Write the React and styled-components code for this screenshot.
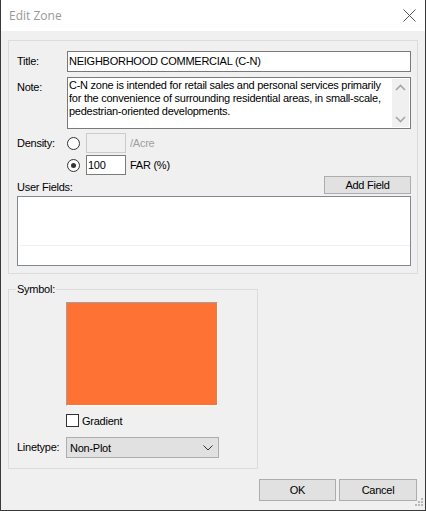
import React from "react";
import styled, { createGlobalStyle } from "styled-components";

const Global = createGlobalStyle`
  html, body { margin: 0; padding: 0; background: #f0f0f0; }
  body { font-family: "Liberation Sans", Arial, sans-serif; font-size: 11px; color: #000; letter-spacing: -0.25px; }
  * { box-sizing: border-box; }
`;

const Window = styled.div`
  width: 426px;
  height: 511px;
  background: #f0f0f0;
  border-left: 1px solid #3a3a3a;
  border-right: 1px solid #3a3a3a;
  border-bottom: 1px solid #3a3a3a;
  display: flex;
  flex-direction: column;
  position: relative;
  overflow: hidden;
`;

const TitleBar = styled.div`
  height: 31px;
  background: #fff;
  display: flex;
  align-items: center;
  justify-content: space-between;
  padding: 0 9px 1px 8px;
`;

const TitleText = styled.span`
  font-family: "Open Sans", "Noto Sans", sans-serif;
  font-size: 12px;
  letter-spacing: 0;
  color: #999;
`;

const Body = styled.div`
  flex: 1;
  display: flex;
  flex-direction: column;
  padding: 9px 7px 0 7px;
`;

const Group = styled.div`
  border: 1px solid #dcdcdc;
  display: flex;
  flex-direction: column;
  padding: ${p => p.$pad};
  width: ${p => p.$w || "auto"};
  margin-top: ${p => p.$mt || "0"};
  position: relative;
`;

const Legend = styled.span`
  position: absolute;
  top: -7px;
  left: 7px;
  background: #f0f0f0;
  padding: 0 1px;
  line-height: 13px;
`;

const FormRow = styled.div`
  display: grid;
  grid-template-columns: 50px 1fr;
  align-items: ${p => p.$align || "center"};
  margin-top: ${p => p.$mt || "0"};
`;

const Label = styled.span`
  padding-top: ${p => p.$pt || "0"};
  line-height: 13px;
`;

const TextBox = styled.div`
  height: ${p => p.$h || "21px"};
  width: ${p => p.$w || "auto"};
  border: 1px solid ${p => (p.$disabled ? "#cccccc" : "#7a7a7a")};
  background: ${p => (p.$disabled ? "#f0f0f0" : "#fff")};
  padding: 2px 1px;
  line-height: 14px;
  display: flex;
  align-items: flex-start;
`;

const NoteBox = styled.div`
  height: 52px;
  border: 1px solid #7a7a7a;
  background: #fff;
  display: flex;
`;

const NoteText = styled.div`
  flex: 1;
  padding: 1px 1px;
  line-height: 13px;
`;

const ScrollBar = styled.div`
  width: 17px;
  margin: 1px;
  background: #f0f0f0;
  display: flex;
  flex-direction: column;
  justify-content: space-between;
  align-items: center;
  padding: 5px 0 4px;
`;

const DensityGrid = styled.div`
  display: grid;
  grid-template-columns: 50px 19px 44px auto;
  grid-auto-rows: 20px;
  row-gap: 2px;
  align-items: center;
  margin-top: 4px;
`;

const Radio = styled.span`
  width: 13px;
  height: 13px;
  border-radius: 50%;
  border: 1px solid #333;
  background: #fff;
  display: flex;
  align-items: center;
  justify-content: center;
  &::after {
    content: "";
    width: 5px;
    height: 5px;
    border-radius: 50%;
    background: ${p => (p.$checked ? "#333" : "transparent")};
  }
`;

const Unit = styled.span`
  color: ${p => (p.$disabled ? "#a0a0a0" : "#000")};
`;

const FieldsHeader = styled.div`
  display: flex;
  justify-content: space-between;
  align-items: flex-end;
  margin-top: 1px;
`;

const Button = styled.button`
  width: ${p => p.$w};
  height: ${p => p.$h || "22px"};
  background: #e1e1e1;
  border: 1px solid #adadad;
  font-family: "Liberation Sans", Arial, sans-serif;
  font-size: 11px;
  letter-spacing: -0.25px;
  color: #000;
  padding: 0;
  margin: 0;
`;

const ListBox = styled.div`
  height: 70px;
  margin-top: 2px;
  border: 1px solid #828790;
  background: #fff;
  display: flex;
  flex-direction: column;
  padding: 48px 0 0 2px;
`;

const ListLine = styled.div`
  height: 1px;
  background: #f0f0f0;
`;

const Swatch = styled.div`
  width: 152px;
  height: 104px;
  background: #fe7334;
  border-top: 1px solid #a0a0a0;
  border-left: 1px solid #a0a0a0;
  border-right: 1px solid #fff;
  border-bottom: 1px solid #fff;
  margin-left: 49px;
`;

const CheckRow = styled.div`
  display: flex;
  align-items: center;
  margin: 8px 0 0 49px;
  gap: 3px;
`;

const CheckBox = styled.span`
  width: 13px;
  height: 13px;
  border: 1px solid #333;
  background: #fff;
`;

const SelectRow = styled.div`
  display: flex;
  align-items: center;
  margin-top: 10px;
`;

const SelectLabel = styled.span`
  width: 49px;
  padding-bottom: 2px;
`;

const Select = styled.div`
  width: 153px;
  height: 21px;
  background: #e1e1e1;
  border: 1px solid #adadad;
  display: flex;
  align-items: center;
  justify-content: space-between;
  padding: 0 5px 0 3px;
`;

const Footer = styled.div`
  display: flex;
  justify-content: flex-end;
  gap: 3px;
  margin-top: 10px;
  padding-right: 1px;
`;

const Grip = styled.svg`
  position: absolute;
  right: 2px;
  bottom: 2px;
`;

const Chevron = ({ up }) => (
  <svg width="11" height="7" viewBox="0 0 11 7">
    <path
      d={up ? "M1 6 L5.5 1.5 L10 6" : "M1 1 L5.5 5.5 L10 1"}
      fill="none"
      stroke="#a6a6a6"
      strokeWidth="1.6"
    />
  </svg>
);

export default function App() {
  return (
    <>
      <Global />
      <Window>
        <TitleBar>
          <TitleText>Edit Zone</TitleText>
          <svg width="13" height="13" viewBox="0 0 13 13">
            <path d="M0.5 0.5 L12.5 12.5 M12.5 0.5 L0.5 12.5" stroke="#555" strokeWidth="1" />
          </svg>
        </TitleBar>
        <Body>
          <Group $pad="10px 6px 7px 8px">
            <FormRow>
              <Label>Title:</Label>
              <TextBox>NEIGHBORHOOD COMMERCIAL (C-N)</TextBox>
            </FormRow>
            <FormRow $align="start" $mt="5px">
              <Label $pt="4px">Note:</Label>
              <NoteBox>
                <NoteText>
                  C-N zone is intended for retail sales and personal services primarily for the
                  convenience of surrounding residential areas, in small-scale,
                  pedestrian-oriented developments.
                </NoteText>
                <ScrollBar>
                  <Chevron up />
                  <Chevron />
                </ScrollBar>
              </NoteBox>
            </FormRow>
            <DensityGrid>
              <Label>Density:</Label>
              <Radio />
              <TextBox $w="40px" $h="20px" $disabled />
              <Unit $disabled>/Acre</Unit>
              <span />
              <Radio $checked />
              <TextBox $w="40px" $h="20px">100</TextBox>
              <Unit>FAR (%)</Unit>
            </DensityGrid>
            <FieldsHeader>
              <Label>User Fields:</Label>
              <Button $w="87px" $h="18px">Add Field</Button>
            </FieldsHeader>
            <ListBox>
              <ListLine />
            </ListBox>
          </Group>
          <Group $w="250px" $mt="15px" $pad="12px 6px 10px 8px">
            <Legend>Symbol:</Legend>
            <Swatch />
            <CheckRow>
              <CheckBox />
              <span>Gradient</span>
            </CheckRow>
            <SelectRow>
              <SelectLabel>Linetype:</SelectLabel>
              <Select>
                <span>Non-Plot</span>
                <svg width="10" height="6" viewBox="0 0 10 6">
                  <path d="M0.5 0.5 L5 5 L9.5 0.5" fill="none" stroke="#333" strokeWidth="1" />
                </svg>
              </Select>
            </SelectRow>
          </Group>
          <Footer>
            <Button $w="77px">OK</Button>
            <Button $w="78px">Cancel</Button>
          </Footer>
        </Body>
        <Grip width="10" height="10" viewBox="0 0 10 10">
          {[[8, 0], [8, 3], [8, 6], [5, 3], [5, 6], [2, 6]].map(([x, y], i) => (
            <rect key={i} x={x} y={y} width="2" height="2" fill="#b8b8b8" />
          ))}
        </Grip>
      </Window>
    </>
  );
}
